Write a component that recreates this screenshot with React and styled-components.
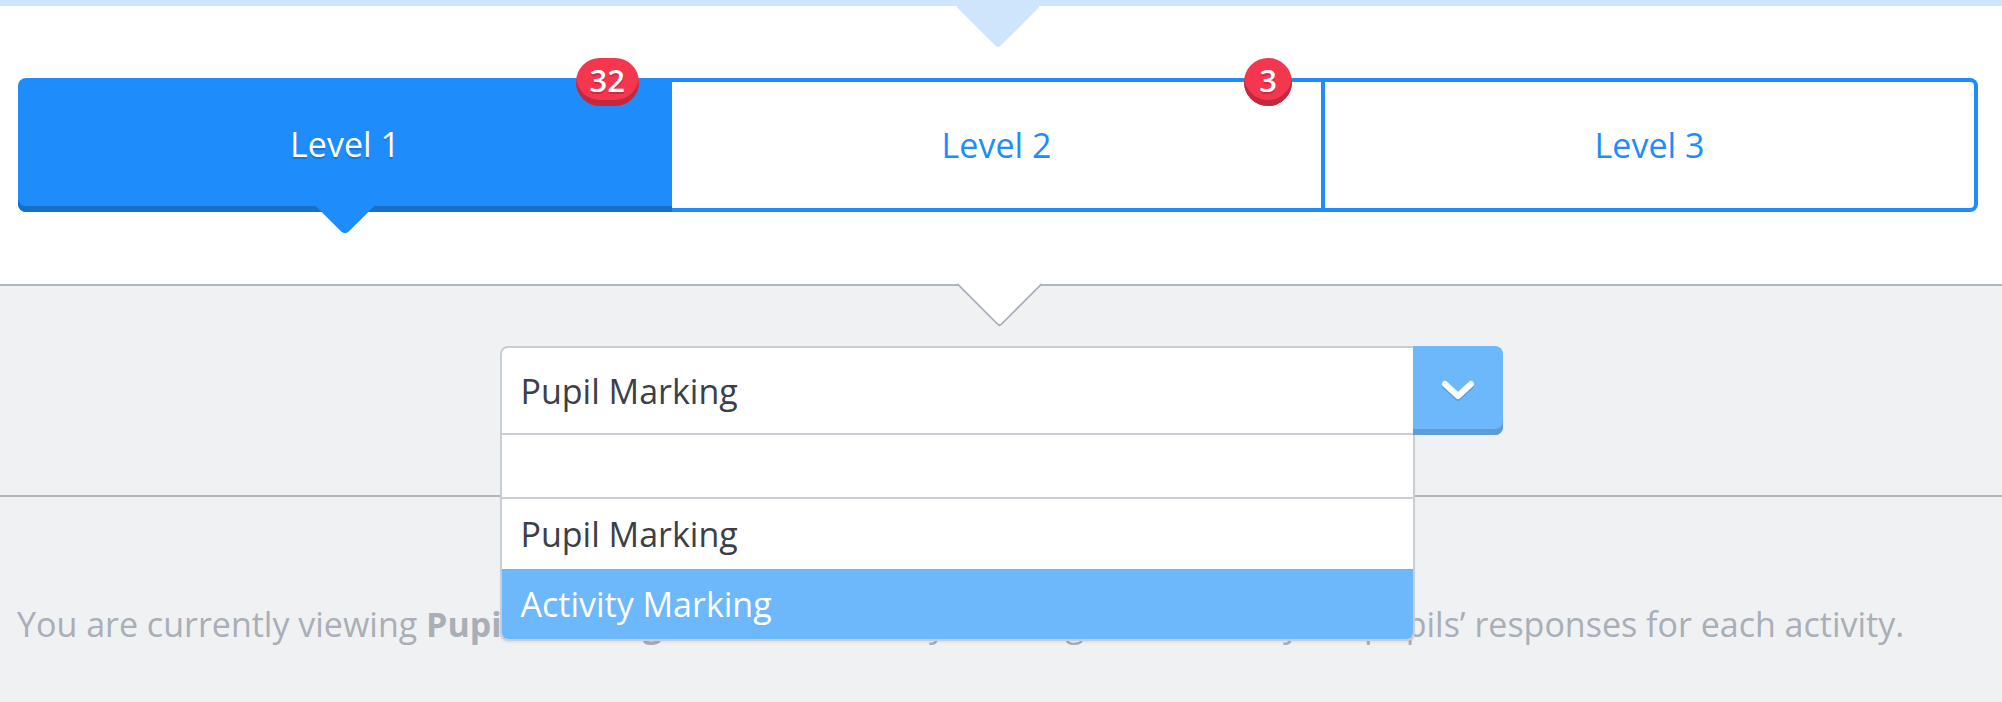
import React from "react";
import styled, { createGlobalStyle, css } from "styled-components";

const GlobalStyle = createGlobalStyle`
  html, body {
    margin: 0;
    padding: 0;
    background: #f0f1f3;
    font-family: "Open Sans", "Noto Sans", sans-serif;
  }
  * { box-sizing: border-box; }
`;

const BLUE = "#1e8cfb";
const BLUE_DARK = "#176fc8";
const LIGHT_BLUE = "#6db8fb";
const LINE = "#b0b5bc";
const FIELD_BORDER = "#c9ced4";

const Page = styled.div`
  display: flex;
  flex-direction: column;
  min-height: 702px;
`;

const TopBar = styled.div`
  position: relative;
  z-index: 3;
  height: 6px;
  background: #cfe5fc;
  &::after {
    content: "";
    position: absolute;
    left: calc(50% - 33.5px);
    top: -24px;
    width: 60px;
    height: 60px;
    background: #cfe5fc;
    border-radius: 4px;
    transform: rotate(45deg);
  }
`;

const LevelsSection = styled.section`
  position: relative;
  z-index: 2;
  background: #ffffff;
  padding: 72px 24px 72px 18px;
  border-bottom: 2px solid ${LINE};
  &::after {
    content: "";
    position: absolute;
    left: calc(50% - 32.5px);
    bottom: -30.5px;
    width: 59px;
    height: 59px;
    background: #ffffff;
    border-right: 2px solid #aab1b9;
    border-bottom: 2px solid #aab1b9;
    border-bottom-right-radius: 4px;
    transform: rotate(45deg);
  }
`;

const Tabs = styled.div`
  display: flex;
  height: 134px;
`;

const Tab = styled.div`
  position: relative;
  flex: 1 1 0px;
  display: flex;
  align-items: center;
  justify-content: center;
  font-size: 34px;
  color: ${BLUE};
  background: #ffffff;
  border-top: 4px solid ${BLUE};
  border-bottom: 4px solid ${BLUE};
  border-right: 4px solid ${BLUE};
  ${(p) =>
    p.$last &&
    css`
      border-radius: 0 8px 8px 0;
    `}
  ${(p) =>
    p.$active &&
    css`
      flex: 1 1 5px;
      color: #ffffff;
      background: ${BLUE};
      border: none;
      border-radius: 8px 0 0 8px;
      box-shadow: inset 0 -6px 0 ${BLUE_DARK};
      text-shadow: 0 2px 0 rgba(10, 70, 140, 0.35);
      padding-bottom: 2px;
      &::after {
        content: "";
        position: absolute;
        left: calc(50% - 25px);
        bottom: -13px;
        width: 50px;
        height: 50px;
        background: ${BLUE};
        border-bottom-right-radius: 5px;
        transform: rotate(45deg);
      }
    `}
`;

const TabLabel = styled.span`
  position: relative;
  z-index: 1;
`;

const Badge = styled.span`
  position: absolute;
  z-index: 2;
  top: ${(p) => (p.$active ? "-20px" : "-24px")};
  right: ${(p) => (p.$active ? "33px" : "29px")};
  min-width: 48px;
  height: 48px;
  padding: 0 14px 4px;
  border-radius: 24px;
  background: #f4364f;
  box-shadow: inset 0 -6px 0 #c3283e;
  color: #ffffff;
  font-size: 31px;
  font-weight: 600;
  line-height: 44px;
  text-align: center;
  text-shadow: 0 2px 0 rgba(120, 10, 30, 0.3);
`;

const SelectSection = styled.section`
  position: relative;
  z-index: 1;
  padding: 60px 0 60px;
  border-bottom: 2px solid ${LINE};
`;

const SelectWrap = styled.div`
  position: relative;
  display: flex;
  width: 1003px;
  height: 89px;
  margin: 0 auto;
`;

const SelectInput = styled.div`
  flex: 1;
  display: flex;
  align-items: center;
  padding: 0 0 0 19px;
  background: #ffffff;
  border: 2px solid ${FIELD_BORDER};
  border-right: none;
  border-radius: 8px 0 0 0;
  color: #3b4048;
  font-size: 34px;
`;

const SelectButton = styled.div`
  width: 90px;
  display: flex;
  align-items: center;
  justify-content: center;
  padding-bottom: 2px;
  background: ${LIGHT_BLUE};
  border-radius: 0 8px 8px 0;
  box-shadow: inset 0 -6px 0 #5c9cd8;
`;

const Dropdown = styled.ul`
  position: absolute;
  top: 100%;
  left: 0;
  width: 915px;
  margin: 0;
  padding: 0;
  list-style: none;
  background: #ffffff;
  border: 2px solid ${FIELD_BORDER};
  border-top: none;
  border-radius: 0 0 8px 8px;
  overflow: hidden;
  box-shadow: 0 2px 2px rgba(0, 0, 0, 0.06);
`;

const Option = styled.li`
  height: ${(p) => (p.$empty ? "64px" : "70px")};
  padding-left: 19px;
  font-size: 34px;
  line-height: 70px;
  color: #3b4048;
  border-bottom: ${(p) => (p.$empty ? `2px solid ${FIELD_BORDER}` : "none")};
  ${(p) =>
    p.$highlighted &&
    css`
      background: ${LIGHT_BLUE};
      color: #ffffff;
    `}
`;

const InfoSection = styled.section`
  padding: 104px 0 0 17px;
`;

const InfoText = styled.p`
  margin: 0;
  font-size: 34px;
  line-height: 46px;
  color: #a9aeb7;
  white-space: nowrap;
  b {
    font-weight: 700;
  }
`;

const Chevron = () => (
  <svg width="36" height="28" viewBox="0 0 36 28" aria-hidden="true">
    <polyline
      points="5,8 18,20 31,8"
      fill="none"
      stroke="#4f8fcc"
      strokeOpacity="0.6"
      strokeWidth="6"
      strokeLinecap="round"
      strokeLinejoin="round"
      transform="translate(0 2)"
    />
    <polyline
      points="5,8 18,20 31,8"
      fill="none"
      stroke="#ffffff"
      strokeWidth="6"
      strokeLinecap="round"
      strokeLinejoin="round"
    />
  </svg>
);

export default function App() {
  return (
    <Page>
      <GlobalStyle />
      <TopBar />
      <LevelsSection>
        <Tabs>
          <Tab $active>
            <TabLabel>Level 1</TabLabel>
            <Badge $active>32</Badge>
          </Tab>
          <Tab>
            <TabLabel>Level 2</TabLabel>
            <Badge>3</Badge>
          </Tab>
          <Tab $last>
            <TabLabel>Level 3</TabLabel>
          </Tab>
        </Tabs>
      </LevelsSection>
      <SelectSection>
        <SelectWrap>
          <SelectInput>Pupil Marking</SelectInput>
          <SelectButton>
            <Chevron />
          </SelectButton>
          <Dropdown>
            <Option $empty />
            <Option>Pupil Marking</Option>
            <Option $highlighted>Activity Marking</Option>
          </Dropdown>
        </SelectWrap>
      </SelectSection>
      <InfoSection>
        <InfoText>
          You are currently viewing <b>Pupil Marking</b>. Switch to Activity
          Marking to see all of your pupils’ responses for each activity.
        </InfoText>
      </InfoSection>
    </Page>
  );
}
